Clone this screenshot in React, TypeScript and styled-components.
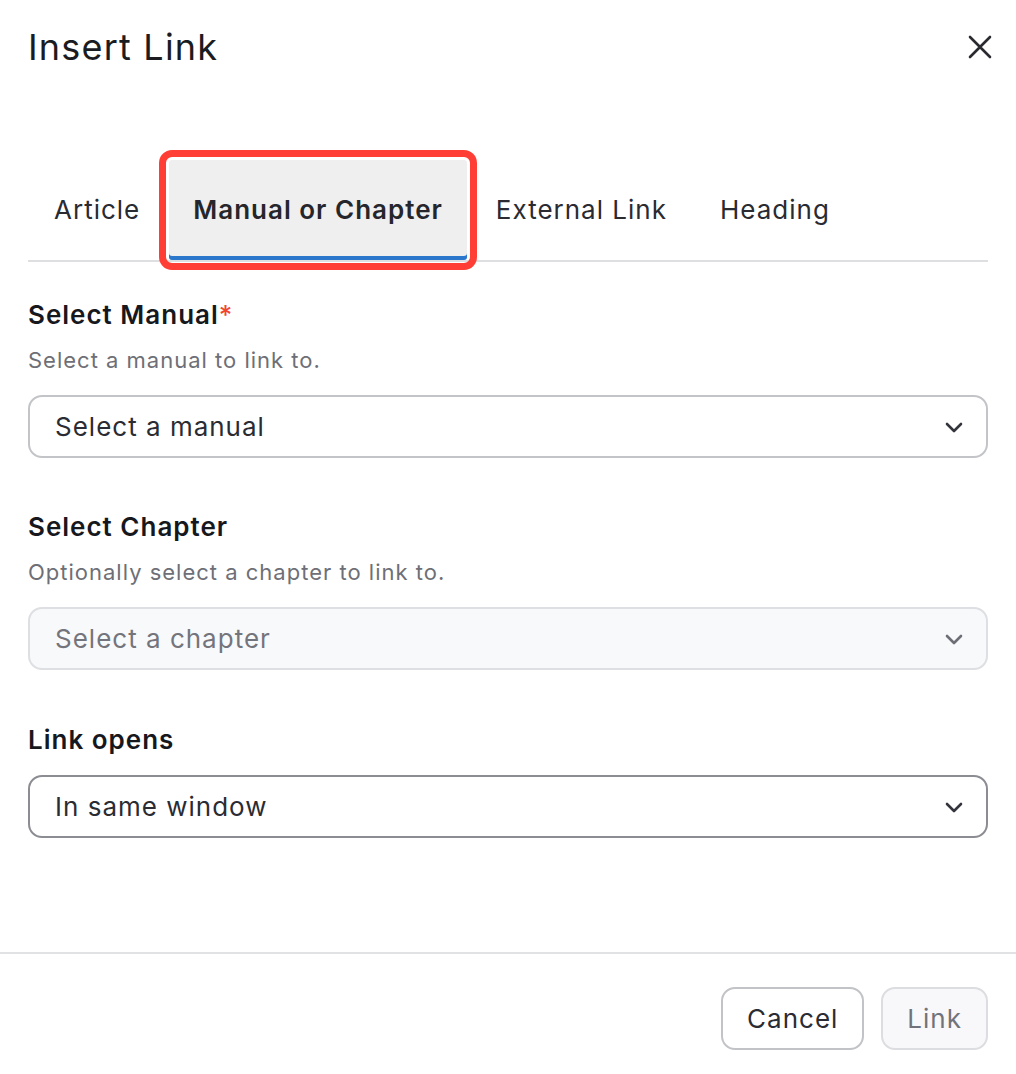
import React from "react";
import styled, { createGlobalStyle } from "styled-components";

const Global = createGlobalStyle`
  html, body { margin: 0; padding: 0; background: #ffffff; }
  body { font-family: Inter, "Noto Sans", Arial, sans-serif; color: #1f2129; letter-spacing: 1px; }
  * { box-sizing: border-box; }
`;

const Modal = styled.div`
  width: 1016px;
  height: 1074px;
  display: flex;
  flex-direction: column;
  background: #fff;
`;

const Body = styled.div`
  padding: 0 28px;
  height: 952px;
  display: flex;
  flex-direction: column;
`;

const Header = styled.div`
  display: flex;
  align-items: center;
  justify-content: space-between;
  margin-top: 23px;
  height: 48px;
`;

const Title = styled.h1`
  margin: 0;
  font-size: 36px;
  line-height: 48px;
  font-weight: 400;
  color: #1b1c22;
  letter-spacing: 1.2px;
`;

const CloseButton = styled.button`
  border: none;
  background: none;
  padding: 0;
  margin-right: -6px;
  width: 28px;
  height: 28px;
  display: flex;
  align-items: center;
  justify-content: center;
  color: #2a2b31;
`;

const TabList = styled.div`
  margin-top: 89px;
  display: flex;
  gap: 5px;
  padding-left: 2px;
  border-bottom: 2px solid #dedfe1;
`;

const Tab = styled.div<{ $active?: boolean }>`
  position: relative;
  height: 100px;
  padding: 0 24px;
  display: flex;
  align-items: center;
  font-size: 26px;
  line-height: 32px;
  font-weight: ${(p) => (p.$active ? 600 : 400)};
  color: ${(p) => (p.$active ? "#25262c" : "#2a2b32")};
  background: ${(p) => (p.$active ? "#efefef" : "transparent")};
  border-radius: 3px 3px 0 0;
  box-shadow: ${(p) => (p.$active ? "inset 0 -4px 0 #2a77cc" : "none")};
  ${(p) =>
    p.$active &&
    `
    outline: 7px solid #ff3f36;
    outline-offset: 3px;
    border-radius: 3px;
  `}
`;

const Field = styled.div<{ $top: number }>`
  margin-top: ${(p) => p.$top}px;
  display: flex;
  flex-direction: column;
`;

const Label = styled.label`
  font-size: 26px;
  line-height: 36px;
  font-weight: 600;
  color: #17181d;
`;

const Required = styled.span`
  color: #f0462f;
  font-weight: 500;
`;

const Hint = styled.div`
  margin-top: 11px;
  font-size: 22px;
  line-height: 32px;
  color: #6e6f76;
`;

const SelectBox = styled.div<{ $variant: "default" | "disabled" | "hover"; $gap: number }>`
  margin-top: ${(p) => p.$gap}px;
  height: 63px;
  border-radius: 14px;
  border: 2px solid
    ${(p) =>
      p.$variant === "disabled" ? "#dedfe2" : p.$variant === "hover" ? "#8c8d93" : "#c3c4c8"};
  background: ${(p) => (p.$variant === "disabled" ? "#f8f9fb" : "#fff")};
  display: flex;
  align-items: center;
  justify-content: space-between;
  padding: 0 22px 0 25px;
  font-size: 26px;
  color: ${(p) => (p.$variant === "disabled" ? "#74757c" : "#2b2c33")};
`;

const Chevron = styled.svg<{ $muted?: boolean }>`
  width: 20px;
  height: 20px;
  color: ${(p) => (p.$muted ? "#6e6f76" : "#34353c")};
`;

const Footer = styled.div`
  border-top: 2px solid #e1e2e4;
  flex: 1;
  display: flex;
  justify-content: flex-end;
  align-items: flex-start;
  padding: 33px 28px 0 0;
  gap: 17px;
`;

const Button = styled.button<{ $disabled?: boolean }>`
  height: 63px;
  padding: 0 24px;
  border-radius: 14px;
  font-family: inherit;
  letter-spacing: 1px;
  font-size: 26px;
  border: 2px solid ${(p) => (p.$disabled ? "#dcdde0" : "#c2c3c7")};
  background: ${(p) => (p.$disabled ? "#f8f8fa" : "#fff")};
  color: ${(p) => (p.$disabled ? "#72737a" : "#2b2c33")};
`;

const ChevronIcon = ({ muted }: { muted?: boolean }) => (
  <Chevron $muted={muted} viewBox="0 0 20 20" fill="none">
    <path d="M3 7l7 7 7-7" stroke="currentColor" strokeWidth="2.6" strokeLinecap="round" strokeLinejoin="round" />
  </Chevron>
);

export default function App() {
  return (
    <>
      <Global />
      <Modal>
        <Body>
          <Header>
            <Title>Insert Link</Title>
            <CloseButton aria-label="Close">
              <svg width="24" height="24" viewBox="0 0 24 24" fill="none">
                <path d="M2 2l20 20M22 2L2 22" stroke="currentColor" strokeWidth="2.6" strokeLinecap="round" />
              </svg>
            </CloseButton>
          </Header>
          <TabList>
            <Tab>Article</Tab>
            <Tab $active>Manual or Chapter</Tab>
            <Tab>External Link</Tab>
            <Tab>Heading</Tab>
          </TabList>
          <Field $top={35}>
            <Label>
              Select Manual<Required>*</Required>
            </Label>
            <Hint>Select a manual to link to.</Hint>
            <SelectBox $variant="default" $gap={19}>
              Select a manual
              <ChevronIcon />
            </SelectBox>
          </Field>
          <Field $top={51}>
            <Label>Select Chapter</Label>
            <Hint>Optionally select a chapter to link to.</Hint>
            <SelectBox $variant="disabled" $gap={19}>
              Select a chapter
              <ChevronIcon muted />
            </SelectBox>
          </Field>
          <Field $top={52}>
            <Label>Link opens</Label>
            <SelectBox $variant="hover" $gap={17}>
              In same window
              <ChevronIcon />
            </SelectBox>
          </Field>
        </Body>
        <Footer>
          <Button>Cancel</Button>
          <Button $disabled>Link</Button>
        </Footer>
      </Modal>
    </>
  );
}
